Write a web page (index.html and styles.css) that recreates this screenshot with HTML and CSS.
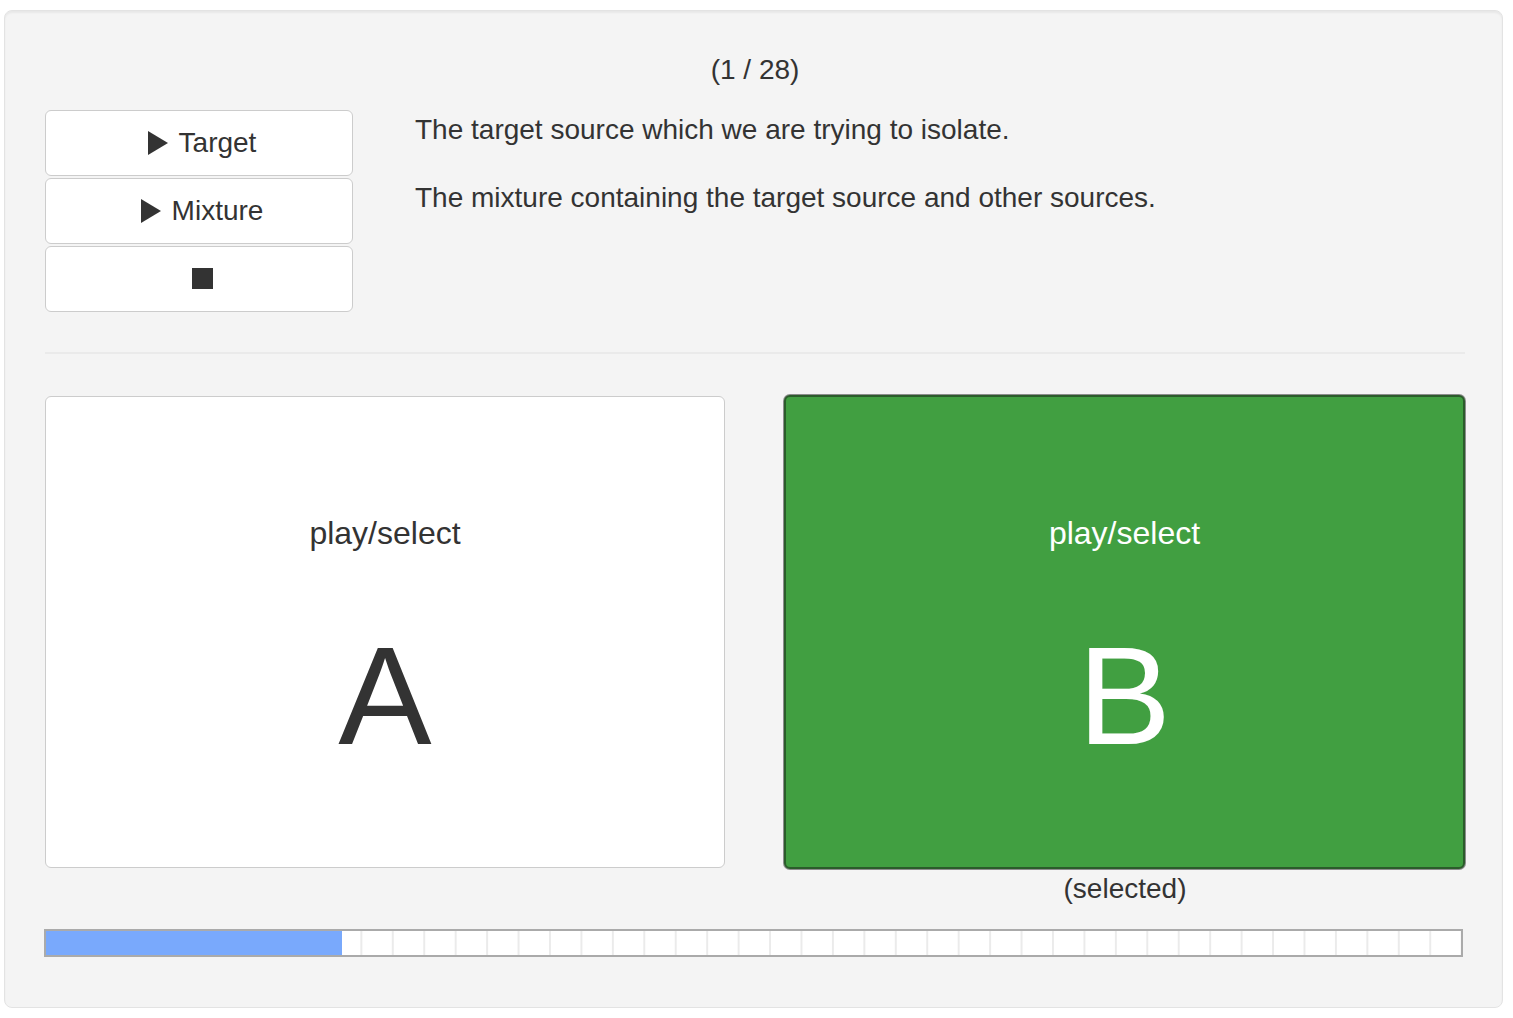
FILE: index.html
```html
<!DOCTYPE html>
<html lang="en">
<head>
    <meta charset="UTF-8">
    <meta name="viewport" content="width=device-width, initial-scale=1.0">
    <title>Listening Test</title>
    <link rel="stylesheet" href="styles.css">
</head>
<body>
    <div class="well">
        <div class="counter">(1 / 28)</div>

        <div class="intro">
            <div class="player-buttons">
                <button class="play-btn">
                    <svg class="icon-play" viewBox="0 0 20 24"><polygon points="0,0 20,12 0,24"/></svg>Target
                </button>
                <button class="play-btn">
                    <svg class="icon-play" viewBox="0 0 20 24"><polygon points="0,0 20,12 0,24"/></svg>Mixture
                </button>
                <button class="play-btn">
                    <svg class="icon-stop" viewBox="0 0 21 21"><rect x="0" y="0" width="21" height="21"/></svg>
                </button>
            </div>
            <div class="descriptions">
                <p>The target source which we are trying to isolate.</p>
                <p>The mixture containing the target source and other sources.</p>
            </div>
        </div>

        <hr>

        <div class="choices">
            <div class="choice">
                <button class="choice-btn">
                    <span class="choice-title">play/select</span>
                    <span class="choice-letter">A</span>
                </button>
            </div>
            <div class="choice">
                <button class="choice-btn selected">
                    <span class="choice-title">play/select</span>
                    <span class="choice-letter">B</span>
                </button>
                <div class="choice-label">(selected)</div>
            </div>
        </div>

        <div class="progress">
            <div class="progress-fill" style="width: 20.9%"></div>
        </div>
    </div>
</body>
</html>
```

FILE: styles.css
```css
:root {
    --text-color: #333;
    --well-bg: #f4f4f4;
    --well-border: #e3e3e3;
    --btn-border: #ccc;
    --selected-bg: #419f41;
    --selected-border: #2b5c2b;
    --progress-border: #aaa;
    --progress-fill: #79a9fc;
    --cell-line: #ebebeb;
}

* {
    box-sizing: border-box;
}

body {
    margin: 0;
    font-family: "Liberation Sans", Arial, sans-serif;
    font-size: 28px;
    line-height: 40px;
    color: var(--text-color);
    background: #fff;
}

.well {
    width: 1499px;
    height: 998px;
    margin: 10px 0 0 4px;
    padding: 39px 37px 0 40px;
    background-color: var(--well-bg);
    border: 1px solid var(--well-border);
    border-radius: 8px;
    box-shadow: inset 0 2px 2px rgba(0, 0, 0, 0.05);
}

.counter {
    text-align: center;
    margin-bottom: 20px;
}

.intro {
    display: grid;
    grid-template-columns: 308px 1fr;
    column-gap: 62px;
}

.player-buttons {
    display: flex;
    flex-direction: column;
    gap: 2px;
}

.play-btn {
    display: flex;
    align-items: center;
    justify-content: center;
    height: 66px;
    padding: 0 0 0 6px;
    background: #fff;
    border: 1px solid var(--btn-border);
    border-radius: 6px;
    font-family: inherit;
    font-size: 28px;
    color: var(--text-color);
    cursor: pointer;
}

.icon-play {
    width: 20px;
    height: 24px;
    margin-right: 11px;
    fill: var(--text-color);
}

.icon-stop {
    width: 21px;
    height: 21px;
    margin-top: -2px;
    fill: var(--text-color);
}

.descriptions p {
    margin: 0 0 28px;
}

hr {
    margin: 40px 0 42px;
    border: 0;
    border-top: 2px solid #eaeaea;
}

.choices {
    display: grid;
    grid-template-columns: 1fr 1fr;
    column-gap: 60px;
}

.choice {
    display: flex;
    flex-direction: column;
    align-items: stretch;
}

.choice-btn {
    display: flex;
    flex-direction: column;
    align-items: center;
    height: 472px;
    padding: 113px 0 0;
    background: #fff;
    border: 1px solid var(--btn-border);
    border-radius: 6px;
    font-family: inherit;
    color: var(--text-color);
    cursor: pointer;
}

.choice-btn.selected {
    height: 474px;
    margin: -1px 0 -1px -1px;
    padding-top: 113px;
    background-color: var(--selected-bg);
    border: 2px solid var(--selected-border);
    box-shadow: 0 0 0 1px #8c8c8c;
    color: #fff;
}

.choice-title {
    font-size: 32px;
    line-height: 46px;
}

.choice-letter {
    margin-top: 70px;
    font-size: 140px;
    line-height: 140px;
}

.choice-label {
    text-align: center;
    margin-top: 1px;
}

.progress {
    display: flex;
    height: 28px;
    margin: 20px 2px 0 -1px;
    border: 2px solid var(--progress-border);
    background: linear-gradient(90deg, var(--cell-line) 2px, #fff 2px) 0 0 / calc(100% / 45) 100%;
}

.progress-fill {
    height: 100%;
    background-color: var(--progress-fill);
}
```
